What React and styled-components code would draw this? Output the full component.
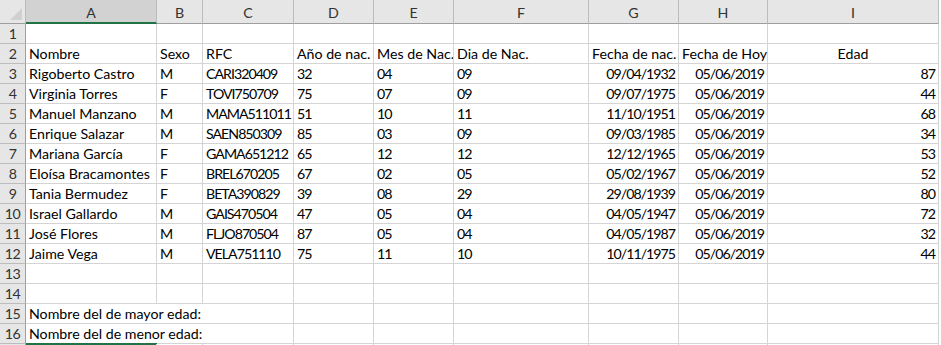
import styled, { createGlobalStyle } from 'styled-components';

const GlobalStyle = createGlobalStyle`
	html, body {
		margin: 0;
		padding: 0;
		background: #fff;
		overflow: hidden;
	}
`;

const COLS = ['A', 'B', 'C', 'D', 'E', 'F', 'G', 'H', 'I'];
const WIDTHS = [26, 131, 46, 91, 80, 80, 135, 90, 89, 171];

const Viewport = styled.div`
	height: 345px;
	overflow: hidden;
`;

const Sheet = styled.div`
	display: grid;
	grid-template-columns: ${WIDTHS.map(w => `${w}px`).join(' ')};
	grid-template-rows: 24px;
	grid-auto-rows: 20px;
	font-family: Lato, 'Liberation Sans', sans-serif;
	font-size: 14.2px;
	color: #000;
`;

const Corner = styled.div`
	position: relative;
	background: #e6e6e6;
	border-right: 1px solid #bcbcbc;
	border-bottom: 1px solid #9e9e9e;
	&::after {
		content: '';
		position: absolute;
		right: 3px;
		bottom: 3px;
		border-style: solid;
		border-width: 0 0 12px 12px;
		border-color: transparent transparent #d0d0d0 transparent;
	}
`;

const ColHead = styled.div`
	display: flex;
	align-items: center;
	justify-content: center;
	padding-top: 2px;
	background: ${({ $active }) => ($active ? '#d2d2d2' : '#e6e6e6')};
	color: #333;
	border-right: 1px solid #bcbcbc;
	border-bottom: ${({ $active }) => ($active ? '2px solid #217346' : '1px solid #9e9e9e')};
	box-sizing: border-box;
`;

const RowHead = styled.div`
	display: flex;
	align-items: flex-end;
	justify-content: center;
	padding-bottom: 1px;
	background: #e6e6e6;
	color: #333;
	letter-spacing: -0.6px;
	border-right: 1px solid #9e9e9e;
	border-bottom: 1px solid #bcbcbc;
	box-sizing: border-box;
`;

const Cell = styled.div`
	grid-column: span ${({ $span }) => $span || 1};
	display: flex;
	align-items: flex-end;
	justify-content: ${({ $align }) =>
		$align === 'right' ? 'flex-end' : $align === 'center' ? 'center' : 'flex-start'};
	padding: 0 3px 1px 3px;
	letter-spacing: ${({ $num }) => ($num ? '-1px' : 'normal')};
	border-right: 1px solid #d4d4d4;
	border-bottom: 1px solid #d4d4d4;
	box-sizing: border-box;
	white-space: nowrap;
	overflow: hidden;
	${({ $selected }) => $selected && `
		box-shadow: 0 -1px 0 #217346, inset 0 1px 0 #217346;
	`}
`;

const people = [
	['Rigoberto Castro', 'M', 'CARI320409', '32', '04', '09', '09/04/1932', 87],
	['Virginia Torres', 'F', 'TOVI750709', '75', '07', '09', '09/07/1975', 44],
	['Manuel Manzano', 'M', 'MAMA511011', '51', '10', '11', '11/10/1951', 68],
	['Enrique Salazar', 'M', 'SAEN850309', '85', '03', '09', '09/03/1985', 34],
	['Mariana García', 'F', 'GAMA651212', '65', '12', '12', '12/12/1965', 53],
	['Eloísa Bracamontes', 'F', 'BREL670205', '67', '02', '05', '05/02/1967', 52],
	['Tania Bermudez', 'F', 'BETA390829', '39', '08', '29', '29/08/1939', 80],
	['Israel Gallardo', 'M', 'GAIS470504', '47', '05', '04', '04/05/1947', 72],
	['José Flores', 'M', 'FLJO870504', '87', '05', '04', '04/05/1987', 32],
	['Jaime Vega', 'M', 'VELA751110', '75', '11', '10', '10/11/1975', 44],
];

const HOY = '05/06/2019';

// label is left off for the row cut by the window edge
const emptyRow = (n, { selectFirst, hideLabel } = {}) => [
	<RowHead key={`h${n}`}>{hideLabel ? '' : n}</RowHead>,
	...COLS.map((c, i) => <Cell key={`${c}${n}`} $selected={selectFirst && i === 0} />),
];

const App = () => {
	const headers = ['Nombre', 'Sexo', 'RFC', 'Año de nac.', 'Mes de Nac.', 'Dia de Nac.', 'Fecha de nac.', 'Fecha de Hoy'];

	return (
		<>
			<GlobalStyle />
			<Viewport>
				<Sheet>
					<Corner />
					{COLS.map(c => <ColHead key={c} $active={c === 'A'}>{c}</ColHead>)}

					{emptyRow(1)}

					<RowHead>2</RowHead>
					{headers.map(h => <Cell key={h}>{h}</Cell>)}
					<Cell $align='center'>Edad</Cell>

					{people.map((p, i) => {
						const [nombre, sexo, rfc, anio, mes, dia, fecha, edad] = p;
						return [
							<RowHead key={`h${i}`}>{i + 3}</RowHead>,
							<Cell key={`a${i}`}>{nombre}</Cell>,
							<Cell key={`b${i}`}>{sexo}</Cell>,
							<Cell key={`c${i}`} $num>{rfc}</Cell>,
							<Cell key={`d${i}`} $num>{anio}</Cell>,
							<Cell key={`e${i}`} $num>{mes}</Cell>,
							<Cell key={`f${i}`} $num>{dia}</Cell>,
							<Cell key={`g${i}`} $num $align='right'>{fecha}</Cell>,
							<Cell key={`i${i}`} $num $align='right'>{HOY}</Cell>,
							<Cell key={`j${i}`} $num $align='right'>{edad}</Cell>,
						];
					})}

					{emptyRow(13)}
					{emptyRow(14)}

					<RowHead>15</RowHead>
					<Cell $span={3}>Nombre del de mayor edad:</Cell>
					{COLS.slice(3).map(c => <Cell key={`${c}15`} />)}

					<RowHead>16</RowHead>
					<Cell $span={3}>Nombre del de menor edad:</Cell>
					{COLS.slice(3).map(c => <Cell key={`${c}16`} />)}

					{emptyRow(17, { selectFirst: true, hideLabel: true })}
				</Sheet>
			</Viewport>
		</>
	);
};

export default App;
